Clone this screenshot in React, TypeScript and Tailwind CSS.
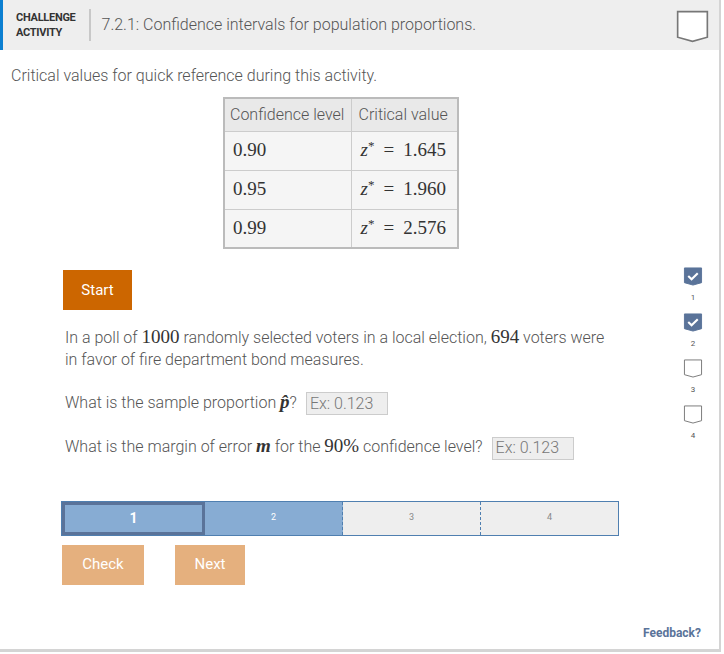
import React from 'react';

const math = "font-['Liberation_Serif',serif]";

function Bookmark({ filled, className }: { filled?: boolean; className?: string }) {
  return (
    <svg viewBox="0 0 20 20" className={className}>
      <path
        d="M1 1 H19 V16.5 L10 19 L1 16.5 Z"
        fill={filled ? '#5a7399' : 'white'}
        stroke={filled ? '#5a7399' : '#777'}
        strokeWidth="1"
      />
      {filled && <path d="M5 9.5 L8.5 13 L15 6.5" fill="none" stroke="white" strokeWidth="2.2" />}
    </svg>
  );
}

function Field() {
  return (
    <span className="ml-[9px] inline-flex h-[23px] w-[82px] items-center border border-[#ccc] bg-[#eee] px-[3px] align-middle text-[16px] text-[#777]">
      Ex: 0.123
    </span>
  );
}

export default function App() {
  const rows = [
    ['0.90', '1.645'],
    ['0.95', '1.960'],
    ['0.99', '2.576'],
  ];
  const steps = [1, 2, 3, 4];

  return (
    <div className="relative h-[654px] w-[724px] bg-white font-['Roboto',sans-serif] text-[#555]">
      <div className="flex h-[652px] w-[721px] flex-col border-r-2 border-b-[3px] border-[#d4d4d4]">
        <div className="flex h-[50px] items-center border-l-[3px] border-[#0b7fd1] bg-[#eee] pl-[13px] pr-[10px]">
          <div className="text-[11px] font-bold leading-[15px] tracking-tight text-[#333]">
            CHALLENGE
            <br />
            ACTIVITY
          </div>
          <div className="ml-[13px] mr-[11px] h-[32px] w-[2px] bg-[#c8c8c8]" />
          <div className="flex-1 text-[16px] font-light text-[#555]">7.2.1: Confidence intervals for population proportions.</div>
          <Bookmark className="mt-[2px] h-[37px] w-[33px]" />
        </div>

        <div className="px-[11px] pt-[16px]">
          <p className="text-[16px] font-light leading-[20px] text-[#555]">Critical values for quick reference during this activity.</p>
          <div className="ml-[212px] mt-[11px] flex">
            <table className="border-2 border-[#bbb] border-collapse bg-[#f5f5f5]">
              <thead>
                <tr className="h-[33px] bg-[#e9e9e9]">
                  <th className="w-[127px] border border-[#ccc] px-[5px] text-left text-[16px] font-light text-[#555]">Confidence level</th>
                  <th className="w-[107px] border border-[#ccc] px-[7px] text-left text-[16px] font-light text-[#555]">Critical value</th>
                </tr>
              </thead>
              <tbody>
                {rows.map(([level, value]) => (
                  <tr key={level} className="h-[39px]">
                    <td className={`border border-[#ccc] px-[8px] text-[19px] text-[#333] ${math}`}>{level}</td>
                    <td className={`border border-[#ccc] pl-[9px] pr-[8px] text-left text-[19px] text-[#333] ${math}`}>
                      <span className="italic">z</span>
                      <sup className="text-[13px]">*</sup>
                      <span className="mx-[9px]">=</span>
                      {value}
                    </td>
                  </tr>
                ))}
              </tbody>
            </table>
          </div>
        </div>

        <div className="mt-[21px] flex flex-1">
          <div className="ml-[61px] w-[558px]">
            <button className="ml-[2px] h-[40px] w-[69px] bg-[#cc6600] text-[15px] text-white">Start</button>

            <div className="ml-[4px] mt-[16px] text-[16px] font-light leading-[22px] text-[#555]">
              <p>
                In a poll of <span className={`text-[19px] text-[#333] ${math}`}>1000</span> randomly selected voters in a local election,{' '}
                <span className={`text-[19px] text-[#333] ${math}`}>694</span> voters were in favor of fire department bond measures.
              </p>
              <p className="mt-[20px]">
                What is the sample proportion <span className={`text-[19px] font-bold italic text-[#333] ${math}`}>p̂</span>?
                <Field />
              </p>
              <p className="mt-[20px]">
                What is the margin of error <span className={`text-[19px] font-bold italic text-[#333] ${math}`}>m</span> for the{' '}
                <span className={`text-[19px] text-[#333] ${math}`}>90%</span> confidence level?
                <Field />
              </p>
            </div>

            <div className="mt-[41px] flex h-[35px] border border-[#4f7fb0]">
              {steps.map((s) => (
                <div
                  key={s}
                  className={
                    s === 1
                      ? 'flex w-[143px] items-center justify-center border-[3px] border-[#5a7399] bg-[#87acd3] text-[14px] font-bold text-white'
                      : s === 2
                        ? 'flex flex-1 items-center justify-center border-r border-dashed border-[#4f7fb0] bg-[#87acd3] text-[9px] text-white'
                        : s === 3
                          ? 'flex flex-1 items-center justify-center border-r border-dashed border-[#4f7fb0] bg-[#eee] text-[9px] text-[#888]'
                          : 'flex flex-1 items-center justify-center bg-[#eee] text-[9px] text-[#888]'
                  }
                >
                  {s}
                </div>
              ))}
            </div>

            <div className="mt-[9px] flex gap-[31px]">
              <button className="ml-[1px] h-[40px] w-[82px] bg-[#e5b07e] text-[15px] text-white">Check</button>
              <button className="h-[40px] w-[70px] bg-[#e5b07e] text-[15px] text-white">Next</button>
            </div>
          </div>

          <div className="ml-[64px] mt-[-3px] flex w-[20px] flex-col items-center">
            {[true, true, false, false].map((done, i) => (
              <div key={i} className="flex h-[46px] flex-col items-center">
                <Bookmark filled={done} className="h-[19px] w-[20px]" />
                <span className="mt-[7px] text-[8px] leading-[10px] text-[#555]">{i + 1}</span>
              </div>
            ))}
          </div>
        </div>

        <div className="flex justify-end pb-[7px] pr-[18px]">
          <span className="text-[12px] font-bold text-[#5a7399]">Feedback?</span>
        </div>
      </div>
    </div>
  );
}
